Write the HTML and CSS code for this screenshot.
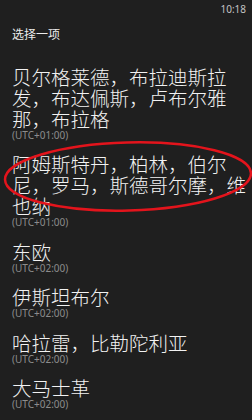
FILE: index.html
```html
<!DOCTYPE html>
<html lang="zh-CN">
<head>
    <meta charset="UTF-8">
    <meta name="viewport" content="width=device-width, initial-scale=1.0">
    <title>选择一项</title>
    <link rel="stylesheet" href="styles.css">
</head>
<body>
    <div class="status">10:18</div>
    <h1 class="title">选择一项</h1>
    <ul class="zones">
        <li class="zone">
            <div class="name">贝尔格莱德，布拉迪斯拉<br>发，布达佩斯，卢布尔雅<br>那，布拉格</div>
            <div class="offset">(UTC+01:00)</div>
        </li>
        <li class="zone marked">
            <div class="name">阿姆斯特丹，柏林，伯尔<br>尼，罗马，斯德哥尔摩，维<br>也纳</div>
            <div class="offset">(UTC+01:00)</div>
            <svg class="circle" width="252" height="78" viewBox="0 0 252 78">
                <ellipse cx="128" cy="38.5" rx="123" ry="34" transform="rotate(-1.5 128 38.5)" />
            </svg>
        </li>
        <li class="zone">
            <div class="name">东欧</div>
            <div class="offset">(UTC+02:00)</div>
        </li>
        <li class="zone">
            <div class="name">伊斯坦布尔</div>
            <div class="offset">(UTC+02:00)</div>
        </li>
        <li class="zone">
            <div class="name">哈拉雷，比勒陀利亚</div>
            <div class="offset">(UTC+02:00)</div>
        </li>
        <li class="zone">
            <div class="name">大马士革</div>
            <div class="offset">(UTC+02:00)</div>
        </li>
    </ul>
</body>
</html>
```

FILE: styles.css
```css
body {
    margin: 0;
    background-color: #1f1f1f;
    color: #f2f2f2;
    font-family: 'Noto Sans', 'Noto Sans CJK SC', sans-serif;
    overflow: hidden;
}
.status {
    height: 20px;
    padding: 3px 6px 0 0;
    box-sizing: border-box;
    text-align: right;
    font-size: 10px;
    line-height: 12px;
    color: #c4c4c4;
}
.title {
    margin: 7.5px 0 0;
    padding-left: 12px;
    font-size: 12px;
    line-height: 14px;
    font-weight: normal;
    color: #ececec;
}
.zones {
    list-style: none;
    margin: 24px 0 0;
    padding: 0 4px 0 12px;
}
.zone {
    position: relative;
    margin-bottom: 12.5px;
}
.name {
    font-family: 'Noto Sans CJK TC', 'Noto Sans CJK SC', sans-serif;
    font-size: 19.5px;
    line-height: 21px;
    font-weight: 300;
}
.offset {
    font-size: 10px;
    line-height: 12px;
    color: #8c8c8c;
}
.circle {
    position: absolute;
    left: -12px;
    top: -15px;
    overflow: visible;
}
.circle ellipse {
    fill: none;
    stroke: #e3141c;
    stroke-width: 2.5;
}
```
